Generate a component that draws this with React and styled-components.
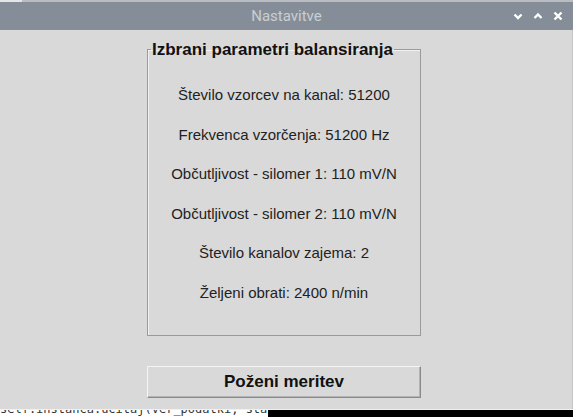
import React from "react";
import styled, { createGlobalStyle } from "styled-components";

const Global = createGlobalStyle`
  html, body { margin: 0; padding: 0; background: #d9d9d9; overflow: hidden; }
  #root { width: 573px; height: 417px; }
`;

const Screen = styled.div`
  width: 573px;
  height: 417px;
  display: flex;
  flex-direction: column;
  font-family: "Liberation Sans", Arial, sans-serif;
`;

const TopEdge = styled.div`
  height: 2px;
  background: linear-gradient(to right, #e6e6e6 0 22px, #b9bcc0 22px);
`;

const TitleBar = styled.div`
  height: 28px;
  background: #858e98;
  display: flex;
  align-items: center;
  position: relative;
`;

const TitleText = styled.div`
  flex: 1;
  text-align: center;
  font-family: Roboto, "Noto Sans", sans-serif;
  font-size: 15px;
  color: #c9ced4;
  margin-top: -1px;
`;

const Controls = styled.div`
  position: absolute;
  right: 8px;
  top: 0;
  height: 28px;
  display: flex;
  align-items: center;
  gap: 6px;
`;

const Ctl = styled.svg`
  width: 14px;
  height: 14px;
  display: block;
`;

const Body = styled.div`
  flex: 1;
  background: #d9d9d9;
  display: flex;
  flex-direction: column;
  align-items: center;
  padding-top: 10px;
  padding-right: 4px;
  box-sizing: border-box;
  border-right: 1px solid #c4c4c4;
`;

const Group = styled.fieldset`
  margin: 0;
  width: 274px;
  box-sizing: border-box;
  height: 296px;
  border: 1px solid #9a9a9a;
  box-shadow: inset 1px 1px 0 #f2f2f2;
  padding: 0;
  display: flex;
  flex-direction: column;
  align-items: center;
  padding-top: 16px;
`;

const Legend = styled.legend`
  margin-left: 3px;
  padding: 0 1px;
  font-size: 17px;
  font-weight: bold;
  color: #111;
  line-height: 19px;
`;

const Row = styled.div`
  font-size: 15px;
  color: #222;
  height: 39.6px;
  line-height: 39.6px;
  white-space: nowrap;
`;

const Button = styled.button`
  margin-top: 30px;
  width: 274px;
  height: 32px;
  background: #d9d9d9;
  border: 1px solid;
  border-color: #f4f4f4 #8a8a8a #8a8a8a #f4f4f4;
  box-shadow: inset -1px -1px 0 #b4b4b4;
  font-family: "Liberation Sans", Arial, sans-serif;
  font-size: 17px;
  font-weight: bold;
  color: #111;
  padding: 0;
`;

const Bottom = styled.div`
  height: 8px;
  display: flex;
  border-top: 1px solid #f0f0f0;
  box-sizing: border-box;
`;

const Terminal = styled.div`
  width: 268px;
  background: #ffffff;
  overflow: hidden;
`;

const TermText = styled.div`
  font-family: "DejaVu Sans Mono", monospace;
  font-size: 12px;
  color: #333;
  white-space: nowrap;
  margin-top: -8px;
  line-height: 14px;
`;

const Black = styled.div`
  flex: 1;
  background: #000;
`;

const rows = [
  "Število vzorcev na kanal: 51200",
  "Frekvenca vzorčenja: 51200 Hz",
  "Občutljivost - silomer 1: 110 mV/N",
  "Občutljivost - silomer 2: 110 mV/N",
  "Število kanalov zajema: 2",
  "Željeni obrati: 2400 n/min",
];

export default function App() {
  return (
    <Screen>
      <Global />
      <TopEdge />
      <TitleBar>
        <TitleText>Nastavitve</TitleText>
        <Controls>
          <Ctl viewBox="0 0 14 14">
            <path d="M3.5 5.5 L7 9 L10.5 5.5" stroke="#fff" strokeWidth="2.4" fill="none" />
          </Ctl>
          <Ctl viewBox="0 0 14 14">
            <path d="M3.5 9 L7 5.5 L10.5 9" stroke="#fff" strokeWidth="2.4" fill="none" />
          </Ctl>
          <Ctl viewBox="0 0 14 14">
            <path d="M3.5 3.5 L10.5 10.5 M10.5 3.5 L3.5 10.5" stroke="#fff" strokeWidth="2.4" fill="none" />
          </Ctl>
        </Controls>
      </TitleBar>
      <Body>
        <Group>
          <Legend>Izbrani parametri balansiranja</Legend>
          {rows.map((r) => (
            <Row key={r}>{r}</Row>
          ))}
        </Group>
        <Button>Poženi meritev</Button>
      </Body>
      <Bottom>
        <Terminal>
          <TermText>self.instanca.ucitaj(ver_podatki, stab)</TermText>
        </Terminal>
        <Black />
      </Bottom>
    </Screen>
  );
}
